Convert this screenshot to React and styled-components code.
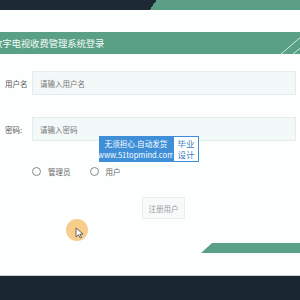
import React from 'react'
import styled, { createGlobalStyle } from 'styled-components'

const Global = createGlobalStyle`
body {
  margin: 0;
  background: #fdfefe;
  font-family: "Noto Sans CJK SC", "Noto Sans", sans-serif;
  overflow: hidden;
}
`;

const Page = styled.div`
width: 300px;
height: 300px;
display: flex;
flex-direction: column;
position: relative;
overflow: hidden;
`;

const TopStrip = styled.div`
height: 10px;
background: linear-gradient(125deg, #1d2a33 0 51%, #5a9f86 51%);
`;

const TitleBar = styled.div`
margin-top: 22px;
height: 22px;
background: #59a085;
display: flex;
align-items: center;
position: relative;
overflow: hidden;
`;

const Title = styled.span`
color: #f4fbf8;
font-size: 9.4px;
margin-left: -7px;
letter-spacing: -0.1px;
white-space: nowrap;
`;

const Slashes = styled.svg`
position: absolute;
right: 0;
top: 0;
`;

const Form = styled.div`
display: flex;
flex-direction: column;
padding-top: 17px;
`;

const Row = styled.div`
display: flex;
align-items: center;
height: 24px;
margin-bottom: ${p => p.gap || 0}px;
`;

const Label = styled.span`
width: 32px;
padding-left: 5px;
box-sizing: border-box;
font-size: 7.5px;
color: #555;
`;

const Input = styled.div`
flex: 1;
margin-right: 4px;
height: 24px;
box-sizing: border-box;
background: #f3f8f8;
border: 1px solid #e4ecec;
display: flex;
align-items: center;
padding-left: 7px;
font-size: 7.5px;
color: #777;
`;

const Radios = styled.div`
display: flex;
align-items: center;
height: 10px;
margin-top: 25px;
padding-left: 32px;
`;

const Radio = styled.label`
display: flex;
align-items: center;
font-size: 7.5px;
color: #666;
margin-right: ${p => p.space}px;
`;

const Circle = styled.span`
width: 7px;
height: 7px;
border: 1px solid #888;
border-radius: 50%;
margin-right: 7px;
`;

const ButtonRow = styled.div`
display: flex;
justify-content: flex-start;
padding-left: 142px;
margin-top: 21px;
`;

const Register = styled.button`
width: 43px;
height: 22px;
background: #f7fafa;
border: 1px solid #e8eeee;
color: #9a9a9a;
font-size: 7.5px;
font-family: inherit;
padding: 0;
`;

const GreenBar = styled.div`
margin-top: 24px;
margin-left: 201px;
height: 10px;
background: #5a9f86;
clip-path: polygon(11px 0, 100% 0, 100% 100%, 0 100%);
`;

const Footer = styled.div`
margin-top: 22px;
flex: 1;
background: #1b2730;
border-top: 1px solid #c9d0d4;
`;

const Badge = styled.div`
position: absolute;
left: 99px;
top: 136px;
display: flex;
height: 26px;
`;

const BadgeBlue = styled.div`
background: #3e8fd8;
color: #fff;
width: 74px;
display: flex;
flex-direction: column;
justify-content: center;
align-items: center;
font-size: 7.6px;
line-height: 11px;
white-space: nowrap;
`;

const BadgeWhite = styled.div`
width: 26px;
background: #fff;
border: 1px solid #3e8fd8;
box-sizing: border-box;
color: #3c7fc2;
font-size: 8.5px;
line-height: 11px;
display: flex;
flex-direction: column;
align-items: center;
justify-content: center;
`;

const Cursor = styled.div`
position: absolute;
left: 66px;
top: 219px;
width: 22px;
height: 22px;
border-radius: 50%;
background: rgba(246, 196, 120, 0.85);
`;

const Arrow = styled.svg`
position: absolute;
left: 75px;
top: 227px;
`;

export default function App() {
  return (
    <Page>
      <Global />
      <TopStrip />
      <TitleBar>
        <Title>数字电视收费管理系统登录</Title>
        <Slashes width="24" height="22" viewBox="0 0 24 22">
          <line x1="5" y1="22" x2="26" y2="4" stroke="#c8f0e2" strokeWidth="1" />
          <line x1="17" y1="22" x2="28" y2="13" stroke="#c8f0e2" strokeWidth="1" />
        </Slashes>
      </TitleBar>
      <Form>
        <Row gap={22}>
          <Label>用户名</Label>
          <Input>请输入用户名</Input>
        </Row>
        <Row>
          <Label>密码:</Label>
          <Input>请输入密码</Input>
        </Row>
        <Radios>
          <Radio space={19}><Circle />管理员</Radio>
          <Radio space={0}><Circle />用户</Radio>
        </Radios>
        <ButtonRow>
          <Register>注册用户</Register>
        </ButtonRow>
      </Form>
      <GreenBar />
      <Footer />
      <Badge>
        <BadgeBlue>
          <span>无须担心.自动发货</span>
          <span>www.51topmind.com</span>
        </BadgeBlue>
        <BadgeWhite>
          <span>毕业</span>
          <span>设计</span>
        </BadgeWhite>
      </Badge>
      <Cursor />
      <Arrow width="9" height="12" viewBox="0 0 9 12">
        <path d="M1 1 L1 10 L3.5 7.8 L5.3 11 L6.6 10.3 L4.9 7.2 L8 7 Z" fill="#fff" stroke="#444" strokeWidth="0.8" />
      </Arrow>
    </Page>
  )
}
